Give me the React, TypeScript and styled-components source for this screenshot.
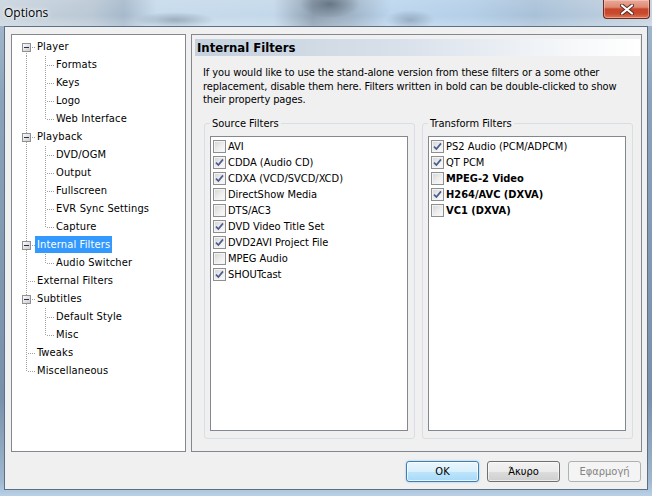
import React from 'react';
import styled, { createGlobalStyle } from 'styled-components';

const UI_FONT = `"DejaVu Sans Condensed", Tahoma, "DejaVu Sans", sans-serif`;

const GlobalStyle = createGlobalStyle`
  html, body {
    margin: 0;
    padding: 0;
  }
  body {
    width: 652px;
    height: 496px;
    overflow: hidden;
    background: #8aa3bb;
    font-family: ${UI_FONT};
    font-size: 11px;
    color: #000;
  }
  * {
    box-sizing: border-box;
  }
`;

const Frame = styled.div`
  width: 652px;
  height: 496px;
  display: flex;
  flex-direction: column;
  background: linear-gradient(to bottom, #a9bccf 0%, #8aa3bb 20%, #7890a9 80%, #9fb8cf 97%, #b9d0e6 100%);
`;

const TitleBar = styled.div`
  height: 26px;
  flex: none;
  display: flex;
  align-items: flex-start;
  background:
    radial-gradient(ellipse 40px 8px at 175px 20px, rgba(70, 85, 100, 0.35), transparent),
    radial-gradient(ellipse 30px 14px at 330px 4px, rgba(40, 50, 60, 0.45), transparent),
    radial-gradient(ellipse 25px 10px at 410px 20px, rgba(60, 75, 90, 0.3), transparent),
    linear-gradient(to bottom, rgba(255, 255, 255, 0.1), rgba(255, 255, 255, 0) 60%, rgba(255, 255, 255, 0.2)),
    linear-gradient(to right, #cad5df 0%, #bac8d5 14%, #a6b9cb 19%, #c7dbec 24%, #c3d8ea 42%, #8d9fb1 48%, #9fb4c7 54%, #bcd6ee 60%, #b4cfe8 72%, #a9c1d8 82%, #b8cbdd 92%, #c6d4e1 100%);
`;

const Title = styled.div`
  padding: 4px 0 0 4px;
  font-family: "Open Sans", "Noto Sans", sans-serif;
  font-size: 12px;
  color: #000;
  text-shadow: 0 0 6px rgba(255, 255, 255, 0.9), 0 0 3px rgba(255, 255, 255, 0.9);
`;

const CloseButton = styled.div`
  margin-left: auto;
  margin-right: 2px;
  width: 47px;
  height: 19px;
  display: flex;
  align-items: center;
  justify-content: center;
  border: 1px solid #6d2a20;
  border-top: none;
  border-radius: 0 0 4px 4px;
  background: linear-gradient(to bottom, #e9a99a 0%, #dd8a73 40%, #c7452b 50%, #c84a2f 75%, #e07552 100%);
  box-shadow: inset 0 0 0 1px rgba(255, 220, 210, 0.45);
`;

const Client = styled.div`
  flex: 1;
  margin: 0 4px 6px 4px;
  border: 1px solid #5c7085;
  background: #f0f0f0;
  padding: 7px 5px 0 6px;
  display: flex;
  flex-direction: column;
`;

const Main = styled.div`
  display: flex;
  gap: 5px;
  height: 418px;
`;

const TreeBox = styled.div`
  width: 175px;
  flex: none;
  border: 1px solid #828790;
  background: #fff;
  padding: 3px 0 0 4px;
`;

const TreeRow = styled.div`
  display: flex;
  height: 18px;
`;

const GuideSvg = styled.svg`
  display: block;
  flex: none;
  shape-rendering: crispEdges;
`;

const TreeLabel = styled.div<{ $selected?: boolean }>`
  height: 17px;
  line-height: 17px;
  padding: 0 2px;
  white-space: nowrap;
  letter-spacing: 0.15px;
  background: ${(p) => (p.$selected ? '#3399ff' : 'transparent')};
  color: ${(p) => (p.$selected ? '#fff' : '#000')};
`;

const Page = styled.div`
  flex: 1;
  border: 1px solid #828790;
  padding: 4px 1px 0 3px;
  display: flex;
  flex-direction: column;
`;

const PageHeader = styled.div`
  height: 17px;
  line-height: 17px;
  padding-left: 2px;
  font-size: 13px;
  font-weight: bold;
  background: linear-gradient(to right, #c5d1de 0%, #d8e0ea 45%, #f6f8fa 85%, #ffffff 100%);
`;

const Description = styled.p`
  margin: 0;
  padding: 10px 0 0 8px;
  line-height: 13.5px;
  letter-spacing: -0.1px;
`;

const Groups = styled.div`
  display: flex;
  gap: 7px;
  padding: 10px 0 0 9px;
`;

const GroupBox = styled.fieldset`
  width: 211px;
  height: 322px;
  margin: 0;
  padding: 0;
  border: 1px solid #d5dfe5;
  border-radius: 3px;
`;

const Legend = styled.legend`
  margin-left: 5px;
  padding: 0 2px;
  line-height: 13px;
`;

const ListBox = styled.div`
  height: 295px;
  margin: 6px 6px 0 5px;
  border: 1px solid #828790;
  background: #fff;
  padding: 2px 2px;
`;

const CheckRow = styled.div<{ $bold?: boolean }>`
  display: flex;
  align-items: center;
  gap: 2px;
  height: 16px;
  white-space: nowrap;
  font-weight: ${(p) => (p.$bold ? 'bold' : 'normal')};
`;

const CheckBox = styled.span`
  width: 13px;
  height: 13px;
  flex: none;
  border: 1px solid #8f8f8f;
  background: linear-gradient(135deg, #d4d4d4 0%, #eeeeee 55%, #fbfbfb 100%);
  box-shadow: inset 0 0 0 1px #f4f4f4;
  display: flex;
  align-items: center;
  justify-content: center;
`;

const Footer = styled.div`
  display: flex;
  justify-content: flex-end;
  gap: 8px;
  margin: 9px 1px 0 0;
`;

const Button = styled.div<{ $variant?: 'default' | 'normal' | 'disabled' }>`
  width: 73px;
  height: 21px;
  display: flex;
  align-items: center;
  justify-content: center;
  border-radius: 3px;
  border: 1px solid
    ${(p) => (p.$variant === 'default' ? '#3c7fb1' : p.$variant === 'disabled' ? '#adb2b5' : '#707070')};
  color: ${(p) => (p.$variant === 'disabled' ? '#838383' : '#000')};
  background: ${(p) =>
    p.$variant === 'default'
      ? 'linear-gradient(to bottom, #eaf6fd 0%, #d9f0fc 50%, #bee6fd 50%, #a7d9f5 100%)'
      : p.$variant === 'disabled'
      ? '#f4f4f4'
      : 'linear-gradient(to bottom, #f2f2f2 0%, #ebebeb 50%, #dddddd 50%, #cfcfcf 100%)'};
  box-shadow: ${(p) =>
    p.$variant === 'default'
      ? 'inset 0 0 0 1px rgba(255,255,255,0.7), 0 0 2px rgba(60,160,230,0.6)'
      : p.$variant === 'disabled'
      ? 'none'
      : 'inset 0 0 0 1px rgba(255,255,255,0.6)'};
`;

type Stem = 'full' | 'top' | 'bottom' | 'none';

const DOT = '#a0a0a0';

const Guide = ({ stem, branch, expander }: { stem: Stem; branch?: boolean; expander?: boolean }) => (
  <GuideSvg width="19" height="18" viewBox="0 0 19 18">
    {stem !== 'none' && (
      <line
        x1="10.5"
        x2="10.5"
        y1={stem === 'bottom' ? 9 : 0}
        y2={stem === 'top' ? 10 : 18}
        stroke={DOT}
        strokeDasharray="1 1"
      />
    )}
    {branch && (
      <line x1={expander ? 16 : 12} x2="19" y1="9.5" y2="9.5" stroke={DOT} strokeDasharray="1 1" />
    )}
    {expander && (
      <g>
        <defs>
          <linearGradient id="exp" x1="0" y1="0" x2="1" y2="1">
            <stop offset="0" stopColor="#ffffff" />
            <stop offset="1" stopColor="#c8c8c8" />
          </linearGradient>
        </defs>
        <rect x="6.5" y="5.5" width="8" height="8" fill="url(#exp)" stroke="#919191" />
        <line x1="8" x2="13" y1="9.5" y2="9.5" stroke="#1c2f5a" />
      </g>
    )}
  </GuideSvg>
);

const Check = () => (
  <svg width="9" height="9" viewBox="0 0 9 9">
    <path d="M1 4.6 L3.4 7 L8 1.4" fill="none" stroke="#4a5c8e" strokeWidth="1.7" />
  </svg>
);

type TreeNode = { label: string; children?: string[]; selected?: boolean };

const tree: TreeNode[] = [
  { label: 'Player', children: ['Formats', 'Keys', 'Logo', 'Web Interface'] },
  { label: 'Playback', children: ['DVD/OGM', 'Output', 'Fullscreen', 'EVR Sync Settings', 'Capture'] },
  { label: 'Internal Filters', children: ['Audio Switcher'], selected: true },
  { label: 'External Filters' },
  { label: 'Subtitles', children: ['Default Style', 'Misc'] },
  { label: 'Tweaks' },
  { label: 'Miscellaneous' },
];

const sourceFilters = [
  { label: 'AVI', checked: false },
  { label: 'CDDA (Audio CD)', checked: true },
  { label: 'CDXA (VCD/SVCD/XCD)', checked: true },
  { label: 'DirectShow Media', checked: false },
  { label: 'DTS/AC3', checked: false },
  { label: 'DVD Video Title Set', checked: true },
  { label: 'DVD2AVI Project File', checked: true },
  { label: 'MPEG Audio', checked: false },
  { label: 'SHOUTcast', checked: true },
];

const transformFilters = [
  { label: 'PS2 Audio (PCM/ADPCM)', checked: true },
  { label: 'QT PCM', checked: true },
  { label: 'MPEG-2 Video', checked: false, bold: true },
  { label: 'H264/AVC (DXVA)', checked: true, bold: true },
  { label: 'VC1 (DXVA)', checked: false, bold: true },
];

const OptionsTree = () => {
  const rows: React.ReactNode[] = [];
  tree.forEach((node, i) => {
    const first = i === 0;
    const last = i === tree.length - 1;
    const hasKids = !!node.children?.length;
    rows.push(
      <TreeRow key={node.label}>
        <Guide stem={first ? 'bottom' : last ? 'top' : 'full'} branch expander={hasKids} />
        <TreeLabel $selected={node.selected}>{node.label}</TreeLabel>
      </TreeRow>
    );
    node.children?.forEach((child, j) => {
      const lastChild = j === node.children!.length - 1;
      rows.push(
        <TreeRow key={node.label + child}>
          <Guide stem={last ? 'none' : 'full'} />
          <Guide stem={lastChild ? 'top' : 'full'} branch />
          <TreeLabel>{child}</TreeLabel>
        </TreeRow>
      );
    });
  });
  return <TreeBox>{rows}</TreeBox>;
};

const FilterList = ({
  title,
  items,
}: {
  title: string;
  items: { label: string; checked: boolean; bold?: boolean }[];
}) => (
  <GroupBox>
    <Legend>{title}</Legend>
    <ListBox>
      {items.map((item) => (
        <CheckRow key={item.label} $bold={item.bold}>
          <CheckBox>{item.checked && <Check />}</CheckBox>
          {item.label}
        </CheckRow>
      ))}
    </ListBox>
  </GroupBox>
);

const App: React.FC = () => (
  <>
    <GlobalStyle />
    <Frame>
      <TitleBar>
        <Title>Options</Title>
        <CloseButton>
          <svg width="14" height="11" viewBox="0 0 14 11">
            <path
              d="M2 1.5 L12 9.5 M12 1.5 L2 9.5"
              stroke="#5a2a22"
              strokeWidth="4"
              strokeLinecap="round"
              fill="none"
            />
            <path
              d="M2 1.5 L12 9.5 M12 1.5 L2 9.5"
              stroke="#ffffff"
              strokeWidth="2.2"
              strokeLinecap="round"
              fill="none"
            />
          </svg>
        </CloseButton>
      </TitleBar>
      <Client>
        <Main>
          <OptionsTree />
          <Page>
            <PageHeader>Internal Filters</PageHeader>
            <Description>
              If you would like to use the stand-alone version from these filters or a some other
              <br />
              replacement, disable them here. Filters written in bold can be double-clicked to show
              <br />
              their property pages.
            </Description>
            <Groups>
              <FilterList title="Source Filters" items={sourceFilters} />
              <FilterList title="Transform Filters" items={transformFilters} />
            </Groups>
          </Page>
        </Main>
        <Footer>
          <Button $variant="default">OK</Button>
          <Button $variant="normal">Άκυρο</Button>
          <Button $variant="disabled">Εφαρμογή</Button>
        </Footer>
      </Client>
    </Frame>
  </>
);

export default App;
